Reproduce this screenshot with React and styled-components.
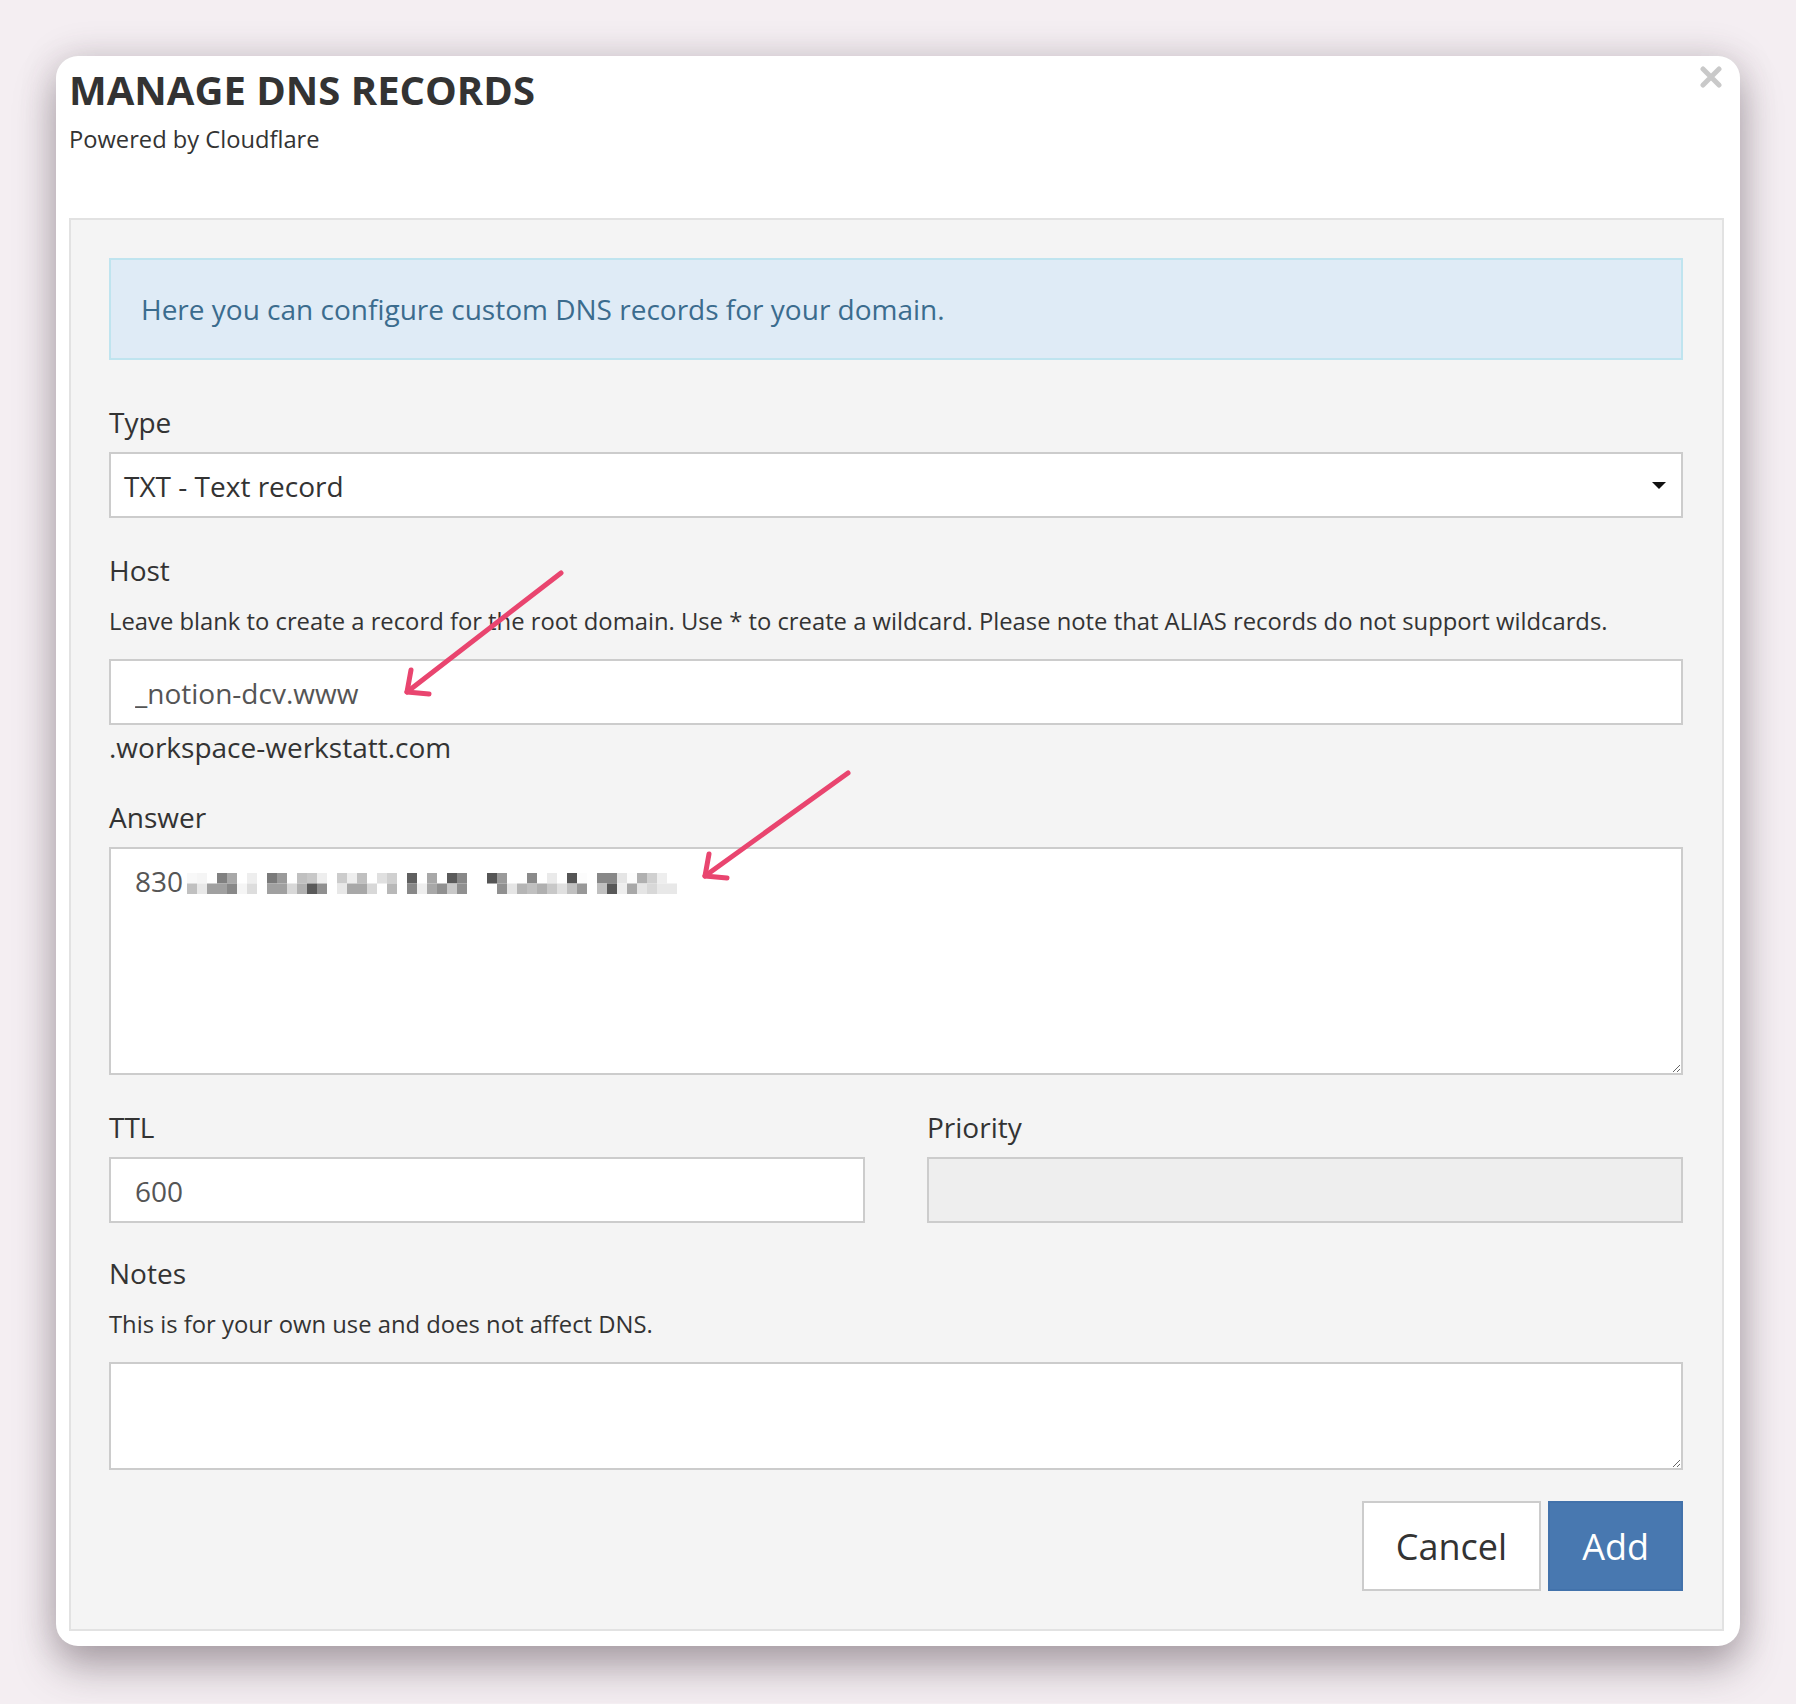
import React from 'react';
import styled, { createGlobalStyle } from 'styled-components';

const GlobalStyle = createGlobalStyle`
  body {
    margin: 0;
    background: #f4eef2;
    font-family: "Open Sans", "Noto Sans", sans-serif;
    color: #333;
  }
`;

const Page = styled.div`
  padding: 56px 0 57px 56px;
`;

const Modal = styled.div`
  position: relative;
  width: 1684px;
  box-sizing: border-box;
  padding: 10px 16px 15px 13px;
  background: #fff;
  border-radius: 22px;
  box-shadow: 0 22px 40px rgba(70, 55, 65, 0.38), 0 0 36px rgba(70, 55, 65, 0.18);
`;

const Header = styled.div`
  display: flex;
  justify-content: space-between;
  align-items: flex-start;
  margin-bottom: 64px;
`;

const Title = styled.h1`
  margin: 0;
  font-size: 40px;
  line-height: 48px;
  font-weight: 700;
  color: #333;
`;

const Subtitle = styled.p`
  margin: 10px 0 0;
  font-size: 23.7px;
  line-height: 30px;
  color: #333;
`;

const CloseButton = styled.button`
  border: 0;
  background: none;
  padding: 0;
  margin: 0 2px 0 0;
  width: 22px;
  height: 22px;
  cursor: pointer;
`;

const Panel = styled.div`
  background: #f4f4f4;
  border: 2px solid #e2e2e2;
  padding: 38px 39px 38px 38px;
`;

const InfoBox = styled.div`
  background: #dfebf6;
  border: 2px solid #bfe4ef;
  padding: 31px 30px 31px;
  font-size: 28px;
  line-height: 36px;
  color: #3b6c8e;
  margin-bottom: 44px;
`;

const Field = styled.div`
  margin-bottom: ${({ $gap }) => $gap ?? 34}px;
`;

const Label = styled.label`
  display: block;
  font-size: 28px;
  line-height: 36px;
  color: #333;
  margin-bottom: ${({ $gap }) => $gap ?? 12}px;
`;

const Help = styled.p`
  margin: 18px 0 23px;
  font-size: 23.8px;
  line-height: 30px;
  color: #333;
`;

const SelectBox = styled.div`
  display: flex;
  align-items: center;
  justify-content: space-between;
  box-sizing: border-box;
  height: 66px;
  padding: 2px 15px 0 13px;
  background: #fff;
  border: 2px solid #ccc;
  font-size: 28px;
  color: #333;
`;

const TextInput = styled.input`
  display: block;
  width: 100%;
  box-sizing: border-box;
  height: 66px;
  padding: 2px 24px 0;
  margin: 0;
  border: 2px solid #ccc;
  border-radius: 0;
  background: ${({ disabled }) => (disabled ? '#eee' : '#fff')};
  font-family: "Open Sans", "Noto Sans", sans-serif;
  font-size: 28px;
  color: #555;
  outline: none;
`;

const Suffix = styled.div`
  margin-top: 4px;
  font-size: 28px;
  line-height: 36px;
  color: #333;
`;

const AnswerWrap = styled.div`
  position: relative;
`;

const TextArea = styled.textarea`
  display: block;
  width: 100%;
  box-sizing: border-box;
  height: ${({ $h }) => $h}px;
  padding: 14px 24px;
  margin: 0;
  border: 2px solid #ccc;
  border-radius: 0;
  background: #fff;
  font-family: "Open Sans", "Noto Sans", sans-serif;
  font-size: 28px;
  line-height: 36px;
  color: #555;
  outline: none;
  resize: vertical;
`;

const Mosaic = styled.svg`
  position: absolute;
  left: 78px;
  top: 26px;
`;

const Row = styled.div`
  display: grid;
  grid-template-columns: 1fr 1fr;
  column-gap: 62px;
  margin-bottom: 32px;
`;

const Actions = styled.div`
  display: flex;
  justify-content: flex-end;
  gap: 7px;
  margin-top: 31px;
`;

const Button = styled.button`
  height: 90px;
  box-sizing: border-box;
  padding: 0 ${({ $px }) => $px}px;
  font-family: "Open Sans", "Noto Sans", sans-serif;
  font-size: 36px;
  border-radius: 0;
  cursor: pointer;
  color: ${({ $primary }) => ($primary ? '#fff' : '#333')};
  background: ${({ $primary }) => ($primary ? '#4878b0' : '#fff')};
  border: 2px solid ${({ $primary }) => ($primary ? '#4272ab' : '#ccc')};
`;

const Annotations = styled.svg`
  position: absolute;
  left: 0;
  top: 0;
  pointer-events: none;
  overflow: visible;
`;

const top = ['f8','f5','ff','80','a8','ff','ee','ff','7a','9a','ff','c0','c8','ee','ff','cc','ee','c0','ff','e0','d0','ff','60','ff','a8','ff','5a','88','ff','ff','55','9a','ff','ff','8a','ff','ea','ff','55','fc','ff','88','88','e5','fc','b0','d0','ee','ff'];
const bottom = ['c0','e8','a0','a0','88','f5','dd','ff','a0','a0','d8','b0','5a','90','ff','e8','a8','a8','d8','ff','b8','ff','88','ee','a8','90','c8','90','ff','ff','ff','90','e5','b5','c0','b0','c8','e0','c0','98','ff','c0','58','ee','a8','e5','d8','e8','e8'];

function Pixelated() {
  return (
    <Mosaic width={490} height={21} viewBox="0 0 490 21">
      {[top, bottom].map((row, r) =>
        row.map((c, i) =>
          c === 'ff' ? null : (
            <rect key={`${r}-${i}`} x={i * 10} y={r * 10.5} width={10} height={10.5} fill={`#${c}${c}${c}`} />
          )
        )
      )}
    </Mosaic>
  );
}

function Arrow({ x1, y1, x2, y2 }) {
  return (
    <g>
      <path d={`M${x1} ${y1} L${x2} ${y2}`} />
      <path d={`M${x2 + 4} ${y2 - 22} L${x2} ${y2} L${x2 + 22} ${y2 + 2}`} />
    </g>
  );
}

export default function App() {
  return (
    <Page>
      <GlobalStyle />
      <Modal>
        <Header>
          <div>
            <Title>MANAGE DNS RECORDS</Title>
            <Subtitle>Powered by Cloudflare</Subtitle>
          </div>
          <CloseButton aria-label="Close">
            <svg width="22" height="22" viewBox="0 0 22 22">
              <path d="M3 3 L19 19 M19 3 L3 19" stroke="#c9c9c9" strokeWidth="5" strokeLinecap="round" />
            </svg>
          </CloseButton>
        </Header>

        <Panel>
          <InfoBox>Here you can configure custom DNS records for your domain.</InfoBox>

          <Field>
            <Label>Type</Label>
            <SelectBox>
              <span>TXT - Text record</span>
              <svg width="14" height="8" viewBox="0 0 14 8">
                <path d="M0 0 H14 L7 7 Z" fill="#111" />
              </svg>
            </SelectBox>
          </Field>

          <Field>
            <Label $gap={0}>Host</Label>
            <Help>Leave blank to create a record for the root domain. Use * to create a wildcard. Please note that ALIAS records do not support wildcards.</Help>
            <TextInput readOnly value="_notion-dcv.www" />
            <Suffix>.workspace-werkstatt.com</Suffix>
          </Field>

          <Field>
            <Label>Answer</Label>
            <AnswerWrap>
              <TextArea $h={228} readOnly value="830" />
              <Pixelated />
            </AnswerWrap>
          </Field>

          <Row>
            <div>
              <Label>TTL</Label>
              <TextInput readOnly value="600" />
            </div>
            <div>
              <Label>Priority</Label>
              <TextInput disabled value="" />
            </div>
          </Row>

          <Field $gap={0}>
            <Label $gap={0}>Notes</Label>
            <Help>This is for your own use and does not affect DNS.</Help>
            <TextArea $h={108} readOnly value="" />
          </Field>

          <Actions>
            <Button $px={32}>Cancel</Button>
            <Button $primary $px={32}>Add</Button>
          </Actions>
        </Panel>

        <Annotations width="1684" height="1600" fill="none" stroke="#e9456f" strokeWidth="5" strokeLinecap="round" strokeLinejoin="round">
          <Arrow x1={505} y1={517} x2={351} y2={636} />
          <Arrow x1={792} y1={717} x2={649} y2={820} />
        </Annotations>
      </Modal>
    </Page>
  );
}
